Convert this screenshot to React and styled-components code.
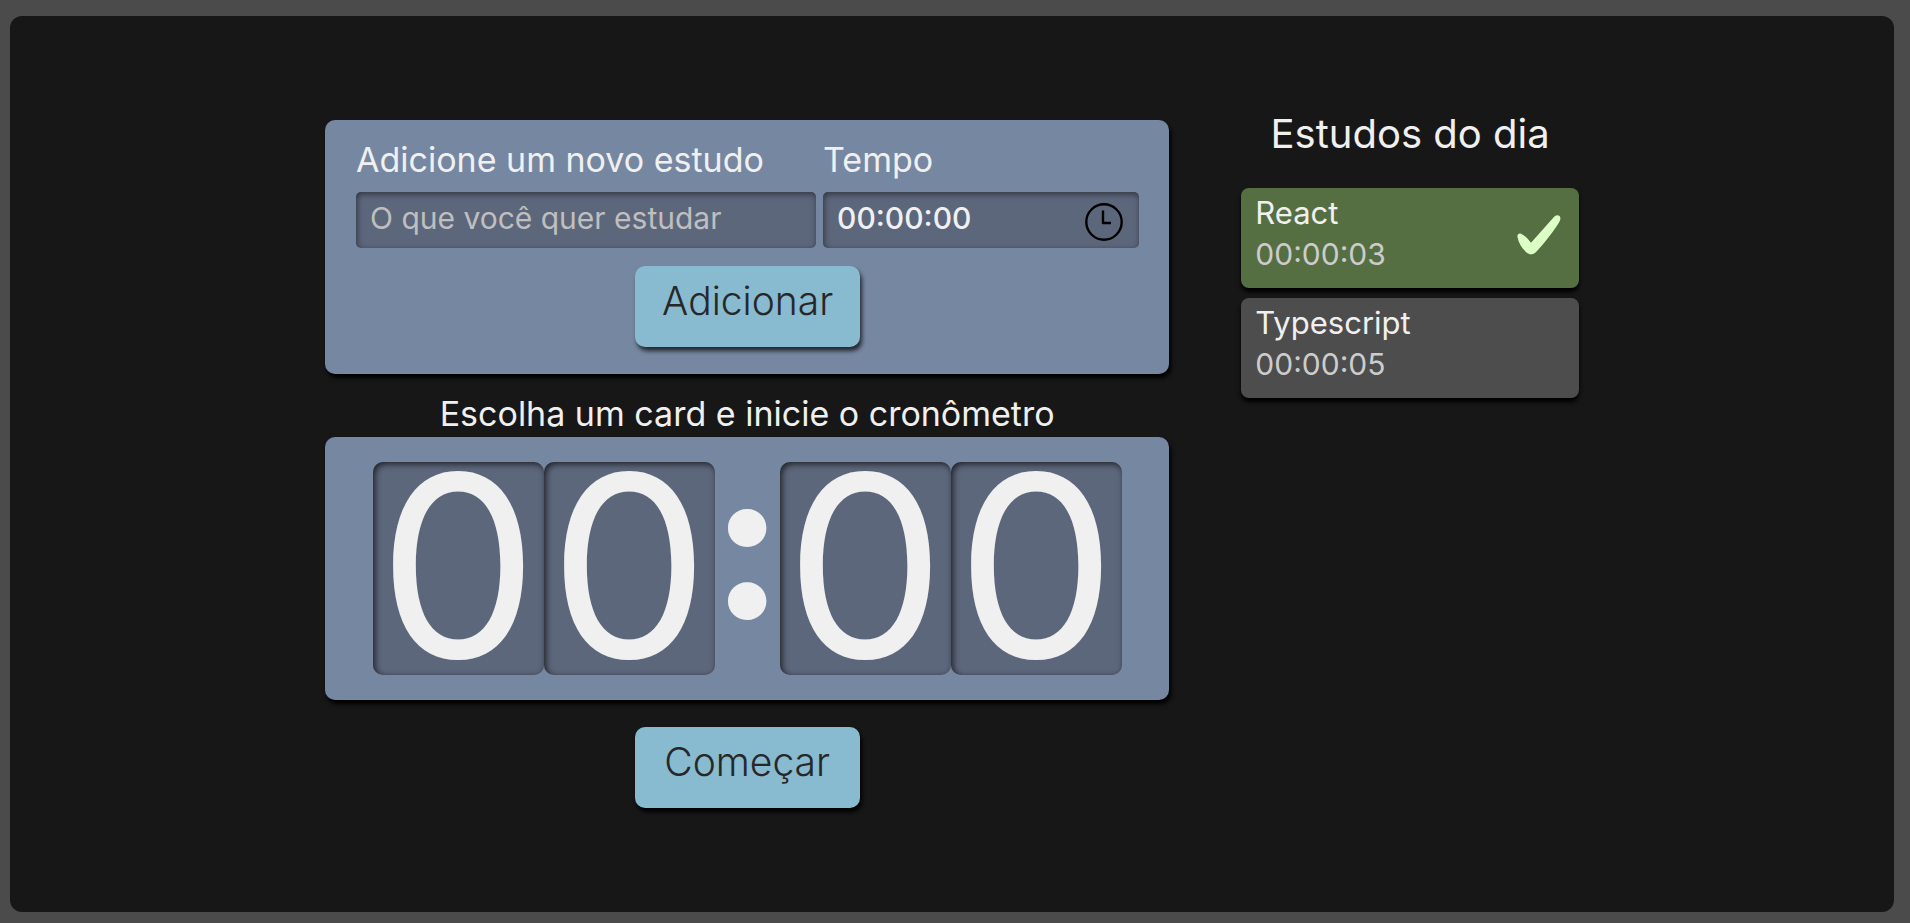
import React, { useState } from 'react';
import styled, { createGlobalStyle } from 'styled-components';

const GlobalStyle = createGlobalStyle`
  * { box-sizing: border-box; margin: 0; padding: 0; }
  body { background: #4b4b4b; color: #f0f0f0; font-family: Inter, Lato, sans-serif; }
  button, input { font: inherit; color: inherit; border: 0; }
  ul { list-style: none; }
`;

const Page = styled.div`
  display: flex;
  min-height: 100vh;
  padding: 16px 16px 11px 10px;
`;

const Frame = styled.main`
  flex: 1;
  padding: 88px 24px;
  border-radius: 12px;
  background: #171717;
`;

const Layout = styled.div`
  display: grid;
  grid-template-columns: 5fr 2fr;
  column-gap: 72px;
  max-width: 1254px;
  margin: 0 auto;
`;

const Column = styled.div`
  display: flex;
  flex-direction: column;
  align-items: center;
  padding-top: 16px;
`;

const Panel = styled.div`
  width: 100%;
  border-radius: 10px;
  background: #7687a1;
  box-shadow: 2px 4px 4px #000000;
`;

const FormPanel = styled(Panel).attrs({ as: 'form' })`
  display: flex;
  flex-direction: column;
  align-items: center;
  gap: 18px;
  padding: 16px 30px 27px 31px;
`;

const Fields = styled.div`
  display: grid;
  grid-template-columns: 16fr 11fr;
  column-gap: 7px;
  width: 100%;
`;

const Field = styled.div`
  display: flex;
  flex-direction: column;
  gap: 8px;
  min-width: 0;
`;

const Label = styled.label`
  font-size: 34px;
  line-height: 48px;
  white-space: nowrap;
`;

const InputBox = styled.div`
  display: flex;
  height: 56px;
  padding: 0 16px 0 14px;
  border-radius: 5px;
  background: #5d677c;
  box-shadow: inset 1px 2px 6px rgba(0, 0, 0, 0.5);
`;

const Input = styled.input`
  flex: 1;
  min-width: 0;
  height: 52px;
  background: transparent;
  outline: none;
  font-size: 30px;
  font-weight: ${(p) => (p.$strong ? 500 : 400)};
  &::placeholder { color: #bfbfbf; opacity: 1; }
`;

const ClockButton = styled.button`
  display: flex;
  align-items: center;
  padding-top: 4px;
  background: transparent;
  color: #000000;
  cursor: pointer;
`;

const ActionButton = styled.button`
  width: 225px;
  height: 81px;
  padding-bottom: 12px;
  border-radius: 10px;
  background: #88bad0;
  box-shadow: 2px 4px 4px ${(p) => (p.$soft ? 'rgba(0, 0, 0, 0.7)' : '#000000')};
  color: #272727;
  font-size: 39px;
  font-weight: 300;
  line-height: 48px;
  cursor: pointer;
`;

const Prompt = styled.h2`
  margin-top: 17px;
  font-size: 34px;
  font-weight: 400;
  line-height: 46px;
  text-align: center;
`;

const ClockPanel = styled(Panel)`
  display: flex;
  justify-content: center;
  margin-bottom: 27px;
  padding: 25px 47px;
`;

const Digit = styled.span`
  flex: 0 1 171px;
  min-width: 0;
  height: 213px;
  border-radius: 10px;
  background: #5d677c;
  box-shadow: inset 2px 2px 6px rgba(0, 0, 0, 0.7);
  font-size: 254px;
  line-height: 208px;
  text-align: center;
`;

const Colon = styled.span`
  display: flex;
  justify-content: center;
  flex: 0 1 65px;
  min-width: 0;
  height: 213px;
  font-size: 208px;
  font-weight: 800;
  line-height: 160px;
`;

const Title = styled.h1`
  margin-bottom: 24px;
  font-size: 40px;
  font-weight: 400;
  line-height: 60px;
  text-align: center;
`;

const StudyList = styled.ul`
  display: flex;
  flex-direction: column;
  gap: 10px;
`;

const StudyCard = styled.li`
  display: flex;
  justify-content: space-between;
  align-items: center;
  height: 100px;
  padding: 0 18px 6px 14px;
  border-radius: 8px;
  background: ${(p) => (p.$done ? '#566f42' : '#4d4d4d')};
  box-shadow: 0 4px 4px #000000;
`;

const StudyText = styled.div`
  padding-bottom: 4px;
`;

const StudyName = styled.h3`
  font-size: 31px;
  font-weight: 400;
  line-height: 42px;
`;

const StudyTime = styled.span`
  display: block;
  color: #cccccc;
  font-size: 30px;
  line-height: 40px;
`;

const ClockIcon = () => (
  <svg width="38" height="38" viewBox="0 0 38 38" fill="none" stroke="currentColor" aria-hidden="true">
    <circle cx="19" cy="19" r="17.7" strokeWidth="2.4" />
    <path d="M18 7.5V20H26" strokeWidth="2.4" strokeLinejoin="round" />
  </svg>
);

const CheckIcon = () => (
  <svg width="44" height="40" viewBox="0 0 44 40" fill="#dcffc5" aria-hidden="true">
    <path d="M0.5 22C0 19.500 2 18 4 18.800C8 20.500 11 24 14 27.800L36.500 2.500C38.500 0 41 -0.200 42.500 1C44 2.500 43.500 5 42 7.500C36 17 26 30 18.500 37.500C16 39.800 12.500 40 9.500 37.500C5 33.500 1.500 28 0.500 22Z" />
  </svg>
);

const studies = [
  { name: 'React', time: '00:00:03', done: true },
  { name: 'Typescript', time: '00:00:05', done: false },
];

export default function App() {
  const [task, setTask] = useState('');
  const [time, setTime] = useState('00:00:00');

  return (
    <>
      <GlobalStyle />
      <Page>
        <Frame>
          <Layout>
            <Column>
              <FormPanel onSubmit={(e) => e.preventDefault()}>
                <Fields>
                  <Field>
                    <Label htmlFor="task">Adicione um novo estudo</Label>
                    <InputBox>
                      <Input
                        id="task"
                        placeholder="O que você quer estudar"
                        value={task}
                        onChange={(e) => setTask(e.target.value)}
                      />
                    </InputBox>
                  </Field>
                  <Field>
                    <Label htmlFor="time">Tempo</Label>
                    <InputBox>
                      <Input id="time" $strong value={time} onChange={(e) => setTime(e.target.value)} />
                      <ClockButton type="button" aria-label="Escolher tempo">
                        <ClockIcon />
                      </ClockButton>
                    </InputBox>
                  </Field>
                </Fields>
                <ActionButton type="submit" $soft>Adicionar</ActionButton>
              </FormPanel>
              <Prompt>Escolha um card e inicie o cronômetro</Prompt>
              <ClockPanel>
                <Digit>0</Digit>
                <Digit>0</Digit>
                <Colon>:</Colon>
                <Digit>0</Digit>
                <Digit>0</Digit>
              </ClockPanel>
              <ActionButton type="button">Começar</ActionButton>
            </Column>
            <aside>
              <Title>Estudos do dia</Title>
              <StudyList>
                {studies.map((s) => (
                  <StudyCard key={s.name} $done={s.done}>
                    <StudyText>
                      <StudyName>{s.name}</StudyName>
                      <StudyTime>{s.time}</StudyTime>
                    </StudyText>
                    {s.done && <CheckIcon />}
                  </StudyCard>
                ))}
              </StudyList>
            </aside>
          </Layout>
        </Frame>
      </Page>
    </>
  );
}
